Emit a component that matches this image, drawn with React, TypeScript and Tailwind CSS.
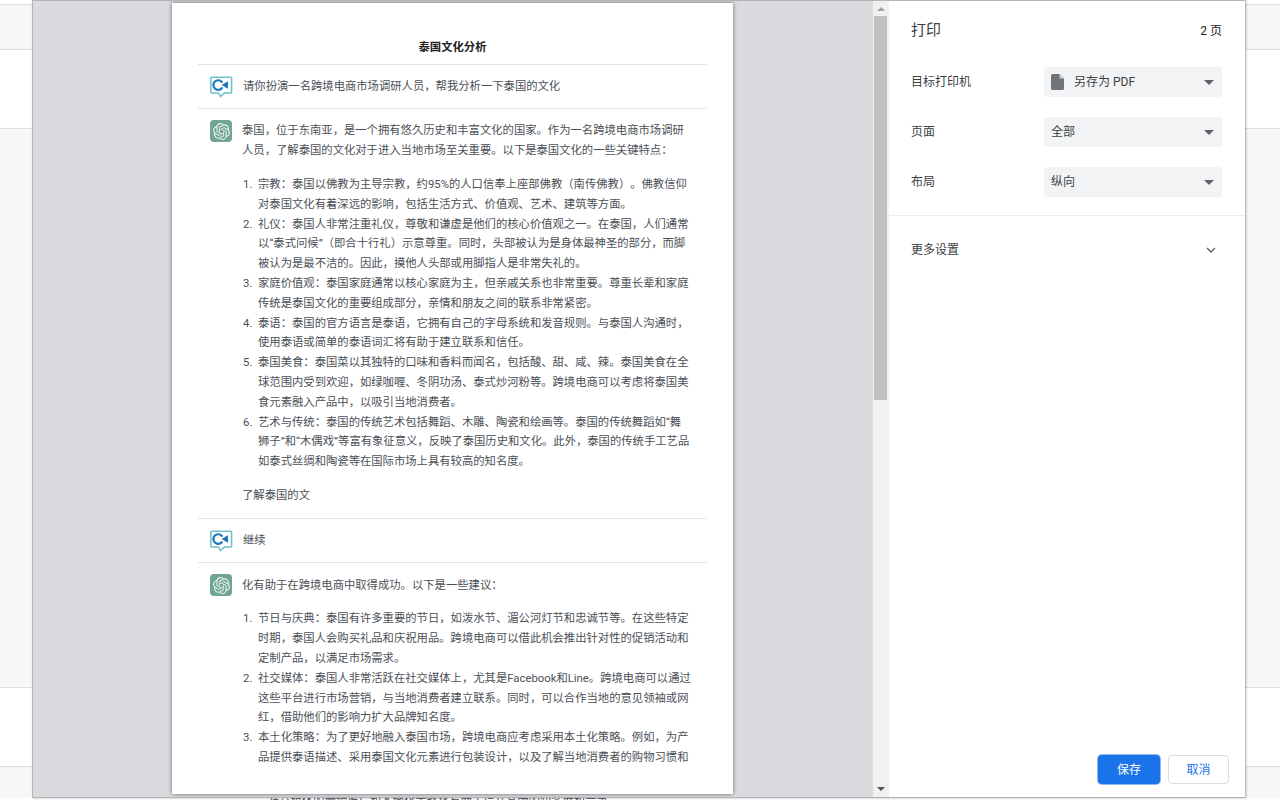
import React from "react";
import { SiOpenai } from "react-icons/si";

const font = { fontFamily: 'Roboto, "Noto Sans CJK SC", "Liberation Sans", sans-serif' };

function UserIcon() {
  return (
    <svg width="24" height="22" viewBox="0 0 24 22" className="shrink-0">
      <path d="M3 1.2H21.6a1 1 0 0 1 1 1V16a1 1 0 0 1-1 1H15.5L11.5 20.6 9.5 17H3a1.2 1.2 0 0 1-1.2-1.2V2.4A1.2 1.2 0 0 1 3 1.2Z" fill="#fff" stroke="#6cc0cb" strokeWidth="1.5" />
      <path d="M12.8 5.9a4.8 4.8 0 1 0 0 6.3" fill="none" stroke="#1877bd" strokeWidth="2.2" strokeLinecap="round" />
      <polygon points="12.6,9 19,5.2 19,12.8" fill="#1877bd" />
    </svg>
  );
}

function BotIcon() {
  return (
    <div className="w-[22px] h-[22px] shrink-0 rounded-[4px] bg-[#6fa592] flex items-center justify-center text-[#e9f2ef]">
      <SiOpenai size={17} />
    </div>
  );
}

function Lines({ lines }: { lines: string[] }) {
  return (
    <div>
      {lines.map((l, i) => (
        <div key={i} className="whitespace-nowrap">{l}</div>
      ))}
    </div>
  );
}

function Item({ n, lines }: { n: number; lines: string[] }) {
  return (
    <li className="flex">
      <span className="w-[16px] pl-[1px] shrink-0">{n}.</span>
      <Lines lines={lines} />
    </li>
  );
}

function Strip() {
  return (
    <div className="h-full flex flex-col bg-[#f7f7f7]">
      <div className="h-[4px] bg-white border-b border-[#dedede] box-content" />
      <div className="h-[44px] border-b border-[#dedede] box-content" />
      <div className="h-[78px] bg-white border-b border-[#dedede] box-content" />
      <div className="h-[558px] border-b border-[#dedede] box-content" />
      <div className="h-[78px] bg-white border-b border-[#dedede] box-content" />
      <div className="flex-1" />
    </div>
  );
}

function Caret() {
  return (
    <svg width="10" height="5" viewBox="0 0 10 5" className="shrink-0">
      <polygon points="0,0 10,0 5,5" fill="#5f6368" />
    </svg>
  );
}

function Row({ label, value, icon }: { label: string; value: string; icon?: boolean }) {
  return (
    <div className="flex items-center h-[30px]">
      <div className="w-[133px] text-[12px] text-[#3c4043]">{label}</div>
      <div className="w-[178px] h-[30px] rounded-[3px] bg-[#f1f3f4] flex items-center pl-[7px] pr-[7px] text-[12px] text-[#3c4043]">
        {icon && (
          <svg width="13" height="16" viewBox="0 0 13 16" className="mr-[10px] shrink-0">
            <path d="M1.5 0H8.5L13 4.5V14.5A1.5 1.5 0 0 1 11.5 16H1.5A1.5 1.5 0 0 1 0 14.5V1.5A1.5 1.5 0 0 1 1.5 0Z" fill="#70757a" />
            <path d="M8.5 0V4.5H13Z" fill="#c9ccd0" />
          </svg>
        )}
        <span className="flex-1">{value}</span>
        <span className="mr-[1px]"><Caret /></span>
      </div>
    </div>
  );
}

export default function App() {
  return (
    <div className="w-[1280px] h-[800px] overflow-hidden bg-white flex flex-col [text-spacing-trim:space-all]" style={font}>
      <div className="h-[798px] flex shrink-0">
        <div className="w-[32px] shrink-0"><Strip /></div>
        <div className="w-[1213px] shrink-0 flex border-l border-t border-b border-[#b5b5b5] shadow-[1px_0_2px_rgba(0,0,0,0.35)] relative">
          <div className="w-[840px] shrink-0 bg-[#d9dbdf] overflow-hidden pl-[139px] pt-[2px]">
            <div className="w-[561px] h-[791px] bg-white shadow-[0_0_4px_rgba(0,0,0,0.55)] overflow-hidden px-[26px] text-[11.33px] leading-[19.8px] text-[#4b4f56]">
              <div className="h-[61px] pt-[35px] text-center font-bold text-[#222]">泰国文化分析</div>
              <div className="border-t border-b border-[#e3e4e6] h-[45px] flex items-center pl-[11px] gap-[10px]">
                <UserIcon />
                <div>请你扮演一名跨境电商市场调研人员，帮我分析一下泰国的文化</div>
              </div>
              <div className="border-b border-[#e3e4e6] h-[410px] pl-[12px] pt-[11px] flex gap-[10px]">
                <BotIcon />
                <div className="pt-[1px]">
                  <Lines lines={["泰国，位于东南亚，是一个拥有悠久历史和丰富文化的国家。作为一名跨境电商市场调研", "人员，了解泰国的文化对于进入当地市场至关重要。以下是泰国文化的一些关键特点："]} />
                  <ol className="mt-[14.4px] mb-[13.6px]">
                    <Item n={1} lines={["宗教：泰国以佛教为主导宗教，约95%的人口信奉上座部佛教（南传佛教）。佛教信仰", "对泰国文化有着深远的影响，包括生活方式、价值观、艺术、建筑等方面。"]} />
                    <Item n={2} lines={["礼仪：泰国人非常注重礼仪，尊敬和谦虚是他们的核心价值观之一。在泰国，人们通常", "以“泰式问候”（即合十行礼）示意尊重。同时，头部被认为是身体最神圣的部分，而脚", "被认为是最不洁的。因此，摸他人头部或用脚指人是非常失礼的。"]} />
                    <Item n={3} lines={["家庭价值观：泰国家庭通常以核心家庭为主，但亲戚关系也非常重要。尊重长辈和家庭", "传统是泰国文化的重要组成部分，亲情和朋友之间的联系非常紧密。"]} />
                    <Item n={4} lines={["泰语：泰国的官方语言是泰语，它拥有自己的字母系统和发音规则。与泰国人沟通时，", "使用泰语或简单的泰语词汇将有助于建立联系和信任。"]} />
                    <Item n={5} lines={["泰国美食：泰国菜以其独特的口味和香料而闻名，包括酸、甜、咸、辣。泰国美食在全", "球范围内受到欢迎，如绿咖喱、冬阴功汤、泰式炒河粉等。跨境电商可以考虑将泰国美", "食元素融入产品中，以吸引当地消费者。"]} />
                    <Item n={6} lines={["艺术与传统：泰国的传统艺术包括舞蹈、木雕、陶瓷和绘画等。泰国的传统舞蹈如“舞", "狮子”和“木偶戏”等富有象征意义，反映了泰国历史和文化。此外，泰国的传统手工艺品", "如泰式丝绸和陶瓷等在国际市场上具有较高的知名度。"]} />
                  </ol>
                  <div>了解泰国的文</div>
                </div>
              </div>
              <div className="border-b border-[#e3e4e6] h-[44px] flex items-center pl-[11px] gap-[10px]">
                <UserIcon />
                <div>继续</div>
              </div>
              <div className="pl-[12px] pt-[11px] flex gap-[10px]">
                <BotIcon />
                <div className="pt-[1.5px]">
                  <div>化有助于在跨境电商中取得成功。以下是一些建议：</div>
                  <ol className="mt-[14.2px]">
                    <Item n={1} lines={["节日与庆典：泰国有许多重要的节日，如泼水节、湄公河灯节和忠诚节等。在这些特定", "时期，泰国人会购买礼品和庆祝用品。跨境电商可以借此机会推出针对性的促销活动和", "定制产品，以满足市场需求。"]} />
                    <Item n={2} lines={["社交媒体：泰国人非常活跃在社交媒体上，尤其是Facebook和Line。跨境电商可以通过", "这些平台进行市场营销，与当地消费者建立联系。同时，可以合作当地的意见领袖或网", "红，借助他们的影响力扩大品牌知名度。"]} />
                    <Item n={3} lines={["本土化策略：为了更好地融入泰国市场，跨境电商应考虑采用本土化策略。例如，为产", "品提供泰语描述、采用泰国文化元素进行包装设计，以及了解当地消费者的购物习惯和"]} />
                  </ol>
                </div>
              </div>
            </div>
          </div>
          <div className="w-[16px] shrink-0 bg-[#f1f1f1] flex flex-col">
            <div className="h-[15px] flex items-center justify-center">
              <svg width="8" height="4" viewBox="0 0 8 4"><polygon points="4,0 8,4 0,4" fill="#a3a3a3" /></svg>
            </div>
            <div className="h-[384px] w-[13px] ml-[1px] bg-[#c1c1c1]" />
            <div className="flex-1" />
            <div className="h-[16px] flex items-center justify-center">
              <svg width="8" height="4" viewBox="0 0 8 4"><polygon points="0,0 8,0 4,4" fill="#505050" /></svg>
            </div>
          </div>
          <div className="flex-1 bg-white flex flex-col">
            <div className="px-[22px] pb-[18px]">
              <div className="h-[66px] flex items-center justify-between pb-[7px] pr-[1px]">
                <div className="text-[15px] text-[#3c4043]">打印</div>
                <div className="text-[12px] text-[#202124]">2 页</div>
              </div>
              <div className="flex flex-col gap-[20px]">
                <Row label="目标打印机" value="另存为 PDF" icon />
                <Row label="页面" value="全部" />
                <Row label="布局" value="纵向" />
              </div>
            </div>
            <div className="border-t border-[#ececec] h-[68px] pl-[22px] pr-[29px] flex items-center justify-between">
              <div className="text-[12px] text-[#3c4043]">更多设置</div>
              <svg width="10" height="6" viewBox="0 0 10 6"><path d="M1 1L5 5L9 1" fill="none" stroke="#5f6368" strokeWidth="1.4" /></svg>
            </div>
            <div className="flex-1" />
            <div className="flex justify-end gap-[8px] pr-[16px] pb-[13px]">
              <button className="w-[62px] h-[29px] rounded-[4px] bg-[#1a73e8] text-white text-[12px] ring-1 ring-[#8fb8f0]">保存</button>
              <button className="w-[61px] h-[29px] rounded-[4px] bg-white border border-[#dadce0] text-[#1a73e8] text-[12px]">取消</button>
            </div>
          </div>
        </div>
        <div className="flex-1"><Strip /></div>
      </div>
      <div className="h-[2px] overflow-hidden pl-[268px] text-[11.33px] leading-[6px] text-[#4b4f56] whitespace-nowrap">
        社交媒体的营销推广和本地化策略将有助于提升品牌的知名度和竞争
      </div>
    </div>
  );
}
